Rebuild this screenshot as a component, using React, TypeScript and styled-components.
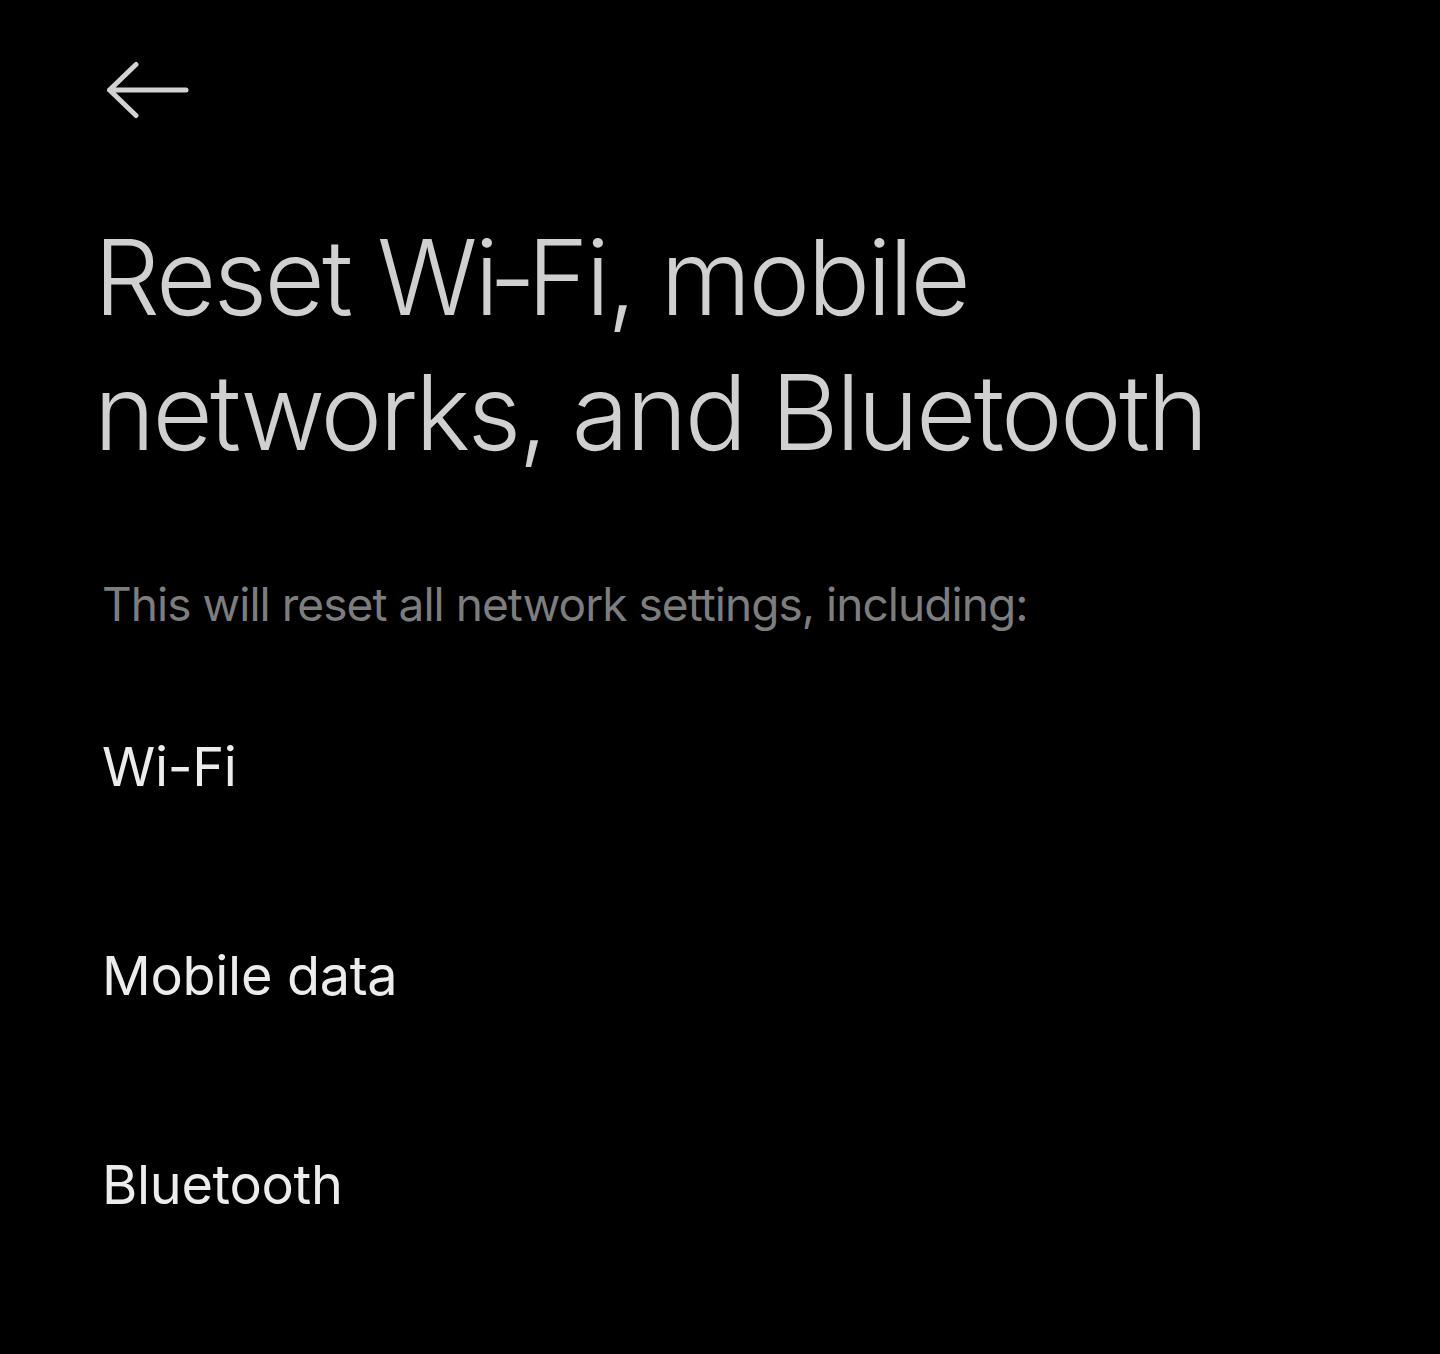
import * as React from 'react';
import styled, { createGlobalStyle } from 'styled-components';

const GlobalStyle = createGlobalStyle`
    html, body {
        margin: 0;
        padding: 0;
        background: #000;
    }
    body {
        font-family: Inter, 'Noto Sans', 'Liberation Sans', sans-serif;
        -webkit-font-smoothing: antialiased;
    }
`;

const items = ['Wi-Fi', 'Mobile data', 'Bluetooth'];

const BackArrow: React.FC = () => (
    <svg width="84" height="60" viewBox="0 0 84 60" fill="none">
        <path
            d="M80 30H3.5M30 4.5L3.5 30 30 55.5"
            stroke="#d2d2d2"
            strokeWidth="5"
            strokeLinecap="round"
            strokeLinejoin="round"
        />
    </svg>
);

const App: React.FC = () => (
    <>
        <GlobalStyle />
        <Page>
            <BackButton aria-label="Back">
                <BackArrow />
            </BackButton>
            <Title>
                Reset Wi‑Fi, mobile
                <br />
                networks, and Bluetooth
            </Title>
            <Subtitle>This will reset all network settings, including:</Subtitle>
            <ItemList>
                {items.map((item) => (
                    <Item key={item}>{item}</Item>
                ))}
            </ItemList>
        </Page>
    </>
);

const Page = styled.div`
    display: flex;
    flex-direction: column;
    align-items: flex-start;
    min-height: 1354px;
    box-sizing: border-box;
    padding: 60px 100px 0 102px;
    background: #000;
`;

const BackButton = styled.button`
    display: flex;
    padding: 0;
    margin: 0 0 0 4px;
    border: none;
    background: none;
    cursor: pointer;
    line-height: 0;
`;

const Title = styled.h1`
    margin: 90px 0 0 -8px;
    font-size: 104px;
    font-weight: 300;
    line-height: 135px;
    color: #d0d0d0;
    letter-spacing: -2.7px;
`;

const Subtitle = styled.p`
    margin: 94px 0 0;
    font-size: 46px;
    font-weight: 400;
    line-height: 60px;
    color: #7d7d7d;
    letter-spacing: -0.95px;
`;

const ItemList = styled.ul`
    display: flex;
    flex-direction: column;
    gap: 149px;
    list-style: none;
    margin: 103px 0 0;
    padding: 0;
`;

const Item = styled.li`
    font-size: 54px;
    font-weight: 400;
    line-height: 60px;
    color: #ececec;
    letter-spacing: -0.3px;
`;

export default App;
